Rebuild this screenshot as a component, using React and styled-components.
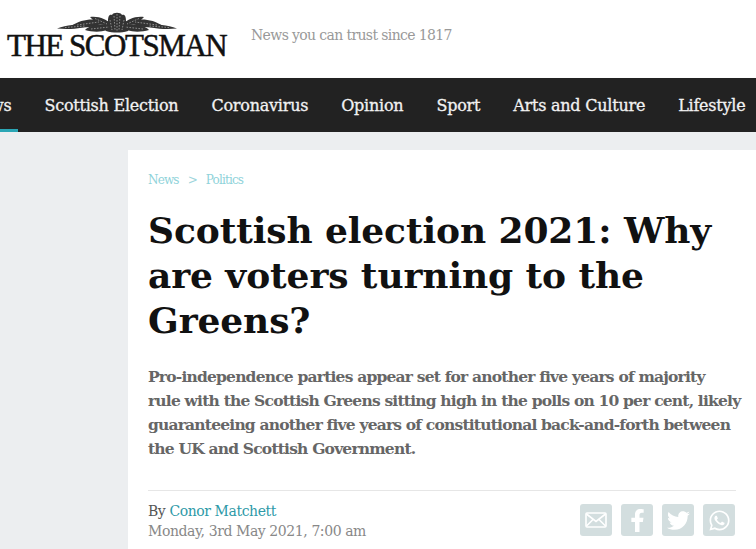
import React from "react";
import styled, { createGlobalStyle } from "styled-components";
import { FaFacebookF, FaTwitter, FaWhatsapp } from "react-icons/fa";

const NAV_ITEMS = [
  { label: "News", active: true },
  { label: "Scottish Election" },
  { label: "Coronavirus" },
  { label: "Opinion" },
  { label: "Sport" },
  { label: "Arts and Culture" },
  { label: "Lifestyle" },
];

export default function App() {
  return (
    <>
      <GlobalStyle />
      <Page>
        <Header>
          <Logo>
            <Crest />
            <Wordmark>THE SCOTSMAN</Wordmark>
          </Logo>
          <Tagline>News you can trust since 1817</Tagline>
        </Header>

        <Nav>
          {NAV_ITEMS.map((item) => (
            <NavItem key={item.label} $active={item.active}>
              {item.label}
            </NavItem>
          ))}
        </Nav>

        <Main>
          <Article>
            <Breadcrumbs>
              <span>News</span>
              <Chevron>&gt;</Chevron>
              <span>Politics</span>
            </Breadcrumbs>
            <Title>Scottish election 2021: Why are voters turning to the Greens?</Title>
            <Lede>
              Pro-independence parties appear set for another five years of majority
              <br />
              rule with the Scottish Greens sitting high in the polls on 10 per cent, likely
              <br />
              guaranteeing another five years of constitutional back-and-forth between
              <br />
              the UK and Scottish Government.
            </Lede>
            <Byline>
              <div>
                <Author>
                  By <AuthorLink>Conor Matchett</AuthorLink>
                </Author>
                <DateLine>Monday, 3rd May 2021, 7:00 am</DateLine>
              </div>
              <Share>
                <ShareButton>
                  <MailIcon />
                </ShareButton>
                <ShareButton>
                  <FaFacebookF />
                </ShareButton>
                <ShareButton>
                  <FaTwitter />
                </ShareButton>
                <ShareButton>
                  <FaWhatsapp />
                </ShareButton>
              </Share>
            </Byline>
          </Article>
        </Main>
      </Page>
    </>
  );
}

// thistle and leaves above the wordmark
function Crest() {
  const leaves = [
    "M0 16.5 C10 13 20 12 32 12 C30 16 14 18 0 16.5 Z",
    "M14 14 C24 7 36 6 46 9 C44 15 26 17 14 14 Z",
    "M28 18 C34 12 46 11 56 14 C52 20 38 21 28 18 Z",
    "M33 5 C42 4 50 7 54 13 C46 14 38 11 33 5 Z",
    "M120 16.5 C110 13 100 12 88 12 C90 16 106 18 120 16.5 Z",
    "M106 14 C96 7 84 6 74 9 C76 15 94 17 106 14 Z",
    "M92 18 C86 12 74 11 64 14 C68 20 82 21 92 18 Z",
    "M87 5 C78 4 70 7 66 13 C74 14 82 11 87 5 Z",
    "M49 19 C46 14 48 10 51 9 C51 5 52 2 55 3 C56 0 64 0 65 3 C68 2 69 5 69 9 C72 10 74 14 71 19 C64 21 56 21 49 19 Z",
  ];
  return (
    <CrestSvg viewBox="0 0 120 21">
      {leaves.map((d) => (
        <path key={d} d={d} fill="#333" />
      ))}
      <path
        d="M8 15.5 L28 14 M20 13 L42 10 M34 17 L52 15 M38 6.5 L50 12 M112 15.5 L92 14 M100 13 L78 10 M86 17 L68 15 M82 6.5 L70 12 M53 8 L55 18 M57 4 L58 18 M60 2 L60 19 M63 4 L62 18 M67 8 L65 18"
        stroke="#c8c8c8"
        strokeWidth="0.6"
        strokeDasharray="1.6 1.4"
        fill="none"
      />
    </CrestSvg>
  );
}

function MailIcon() {
  return (
    <svg width="22" height="16" viewBox="0 0 22 16" fill="none" stroke="#fff" strokeWidth="1.6">
      <rect x="1" y="1" width="20" height="14" rx="1" />
      <path d="M1.5 2 L11 9.5 L20.5 2 M1.5 14 L8 7.5 M20.5 14 L14 7.5" />
    </svg>
  );
}

const GlobalStyle = createGlobalStyle`
  html, body {
    margin: 0;
    padding: 0;
    background: #fff;
  }
  body {
    font-family: "DejaVu Serif", "Liberation Serif", serif;
  }
`;

const Page = styled.div`
  width: 756px;
  height: 549px;
  overflow: hidden;
  display: flex;
  flex-direction: column;
`;

const Header = styled.header`
  height: 78px;
  flex: none;
  display: flex;
  align-items: center;
  padding-left: 7px;
  background: #fff;
`;

const Logo = styled.div`
  width: 219px;
  display: flex;
  flex-direction: column;
  align-items: center;
  margin-top: -7px;
`;

const CrestSvg = styled.svg`
  width: 120px;
  height: 21px;
  margin-bottom: -1px;
`;

const Wordmark = styled.div`
  font-family: "Liberation Serif", serif;
  font-size: 31px;
  line-height: 28px;
  color: #111;
  white-space: nowrap;
  letter-spacing: -1.48px;
  -webkit-text-stroke: 0.5px #111;
`;

const Tagline = styled.div`
  margin-left: 25px;
  margin-top: -8px;
  font-size: 14px;
  letter-spacing: -0.63px;
  color: #999;
`;

const Nav = styled.nav`
  height: 54px;
  flex: none;
  display: flex;
  gap: 33px;
  margin-left: -33px;
  background: #222;
  box-shadow: 0 1px 2px rgba(0, 0, 0, 0.15);
`;

const NavItem = styled.div`
  position: relative;
  display: flex;
  align-items: center;
  font-size: 16px;
  letter-spacing: -0.23px;
  color: #f2f2f2;
  white-space: nowrap;
  -webkit-text-stroke: 0.3px #f2f2f2;

  &::after {
    content: "";
    display: ${(props) => (props.$active ? "block" : "none")};
    position: absolute;
    left: -16px;
    right: -7px;
    bottom: 0;
    height: 3px;
    background: #2ba6b5;
  }
`;

const Main = styled.main`
  flex: 1;
  padding: 18px 0 0 128px;
  background: #eceef0;
`;

const Article = styled.article`
  height: 100%;
  padding: 22px 20px 0;
  background: #fff;
`;

const Breadcrumbs = styled.div`
  display: flex;
  gap: 9px;
  font-size: 12px;
  letter-spacing: -0.85px;
  line-height: 16px;
  color: #8fd3da;
`;

const Chevron = styled.span`
  color: #9fd6dc;
`;

const Title = styled.h1`
  margin: 20px 0 0;
  font-size: 36px;
  line-height: 45px;
  font-weight: 700;
  letter-spacing: -0.1px;
  color: #111;
`;

const Lede = styled.p`
  margin: 22px 0 0;
  font-size: 15.5px;
  line-height: 24px;
  font-weight: 700;
  letter-spacing: -0.8px;
  white-space: nowrap;
  color: #666;
`;

const Byline = styled.div`
  margin-top: 29px;
  padding-top: 10px;
  border-top: 1px solid #e6e6e6;
  display: flex;
  justify-content: space-between;
`;

const Author = styled.div`
  font-size: 14px;
  line-height: 20px;
  letter-spacing: -0.42px;
  color: #555;
`;

const AuthorLink = styled.span`
  color: #2e9aa8;
`;

const DateLine = styled.div`
  font-size: 14px;
  line-height: 20px;
  letter-spacing: -0.42px;
  color: #888;
`;

const Share = styled.div`
  display: flex;
  gap: 9px;
  margin-top: 3px;
  margin-right: 1px;
`;

const ShareButton = styled.div`
  width: 32px;
  height: 32px;
  border-radius: 3px;
  display: flex;
  align-items: center;
  justify-content: center;
  background: #d3dedf;
  color: #fff;
  font-size: 23px;
`;
